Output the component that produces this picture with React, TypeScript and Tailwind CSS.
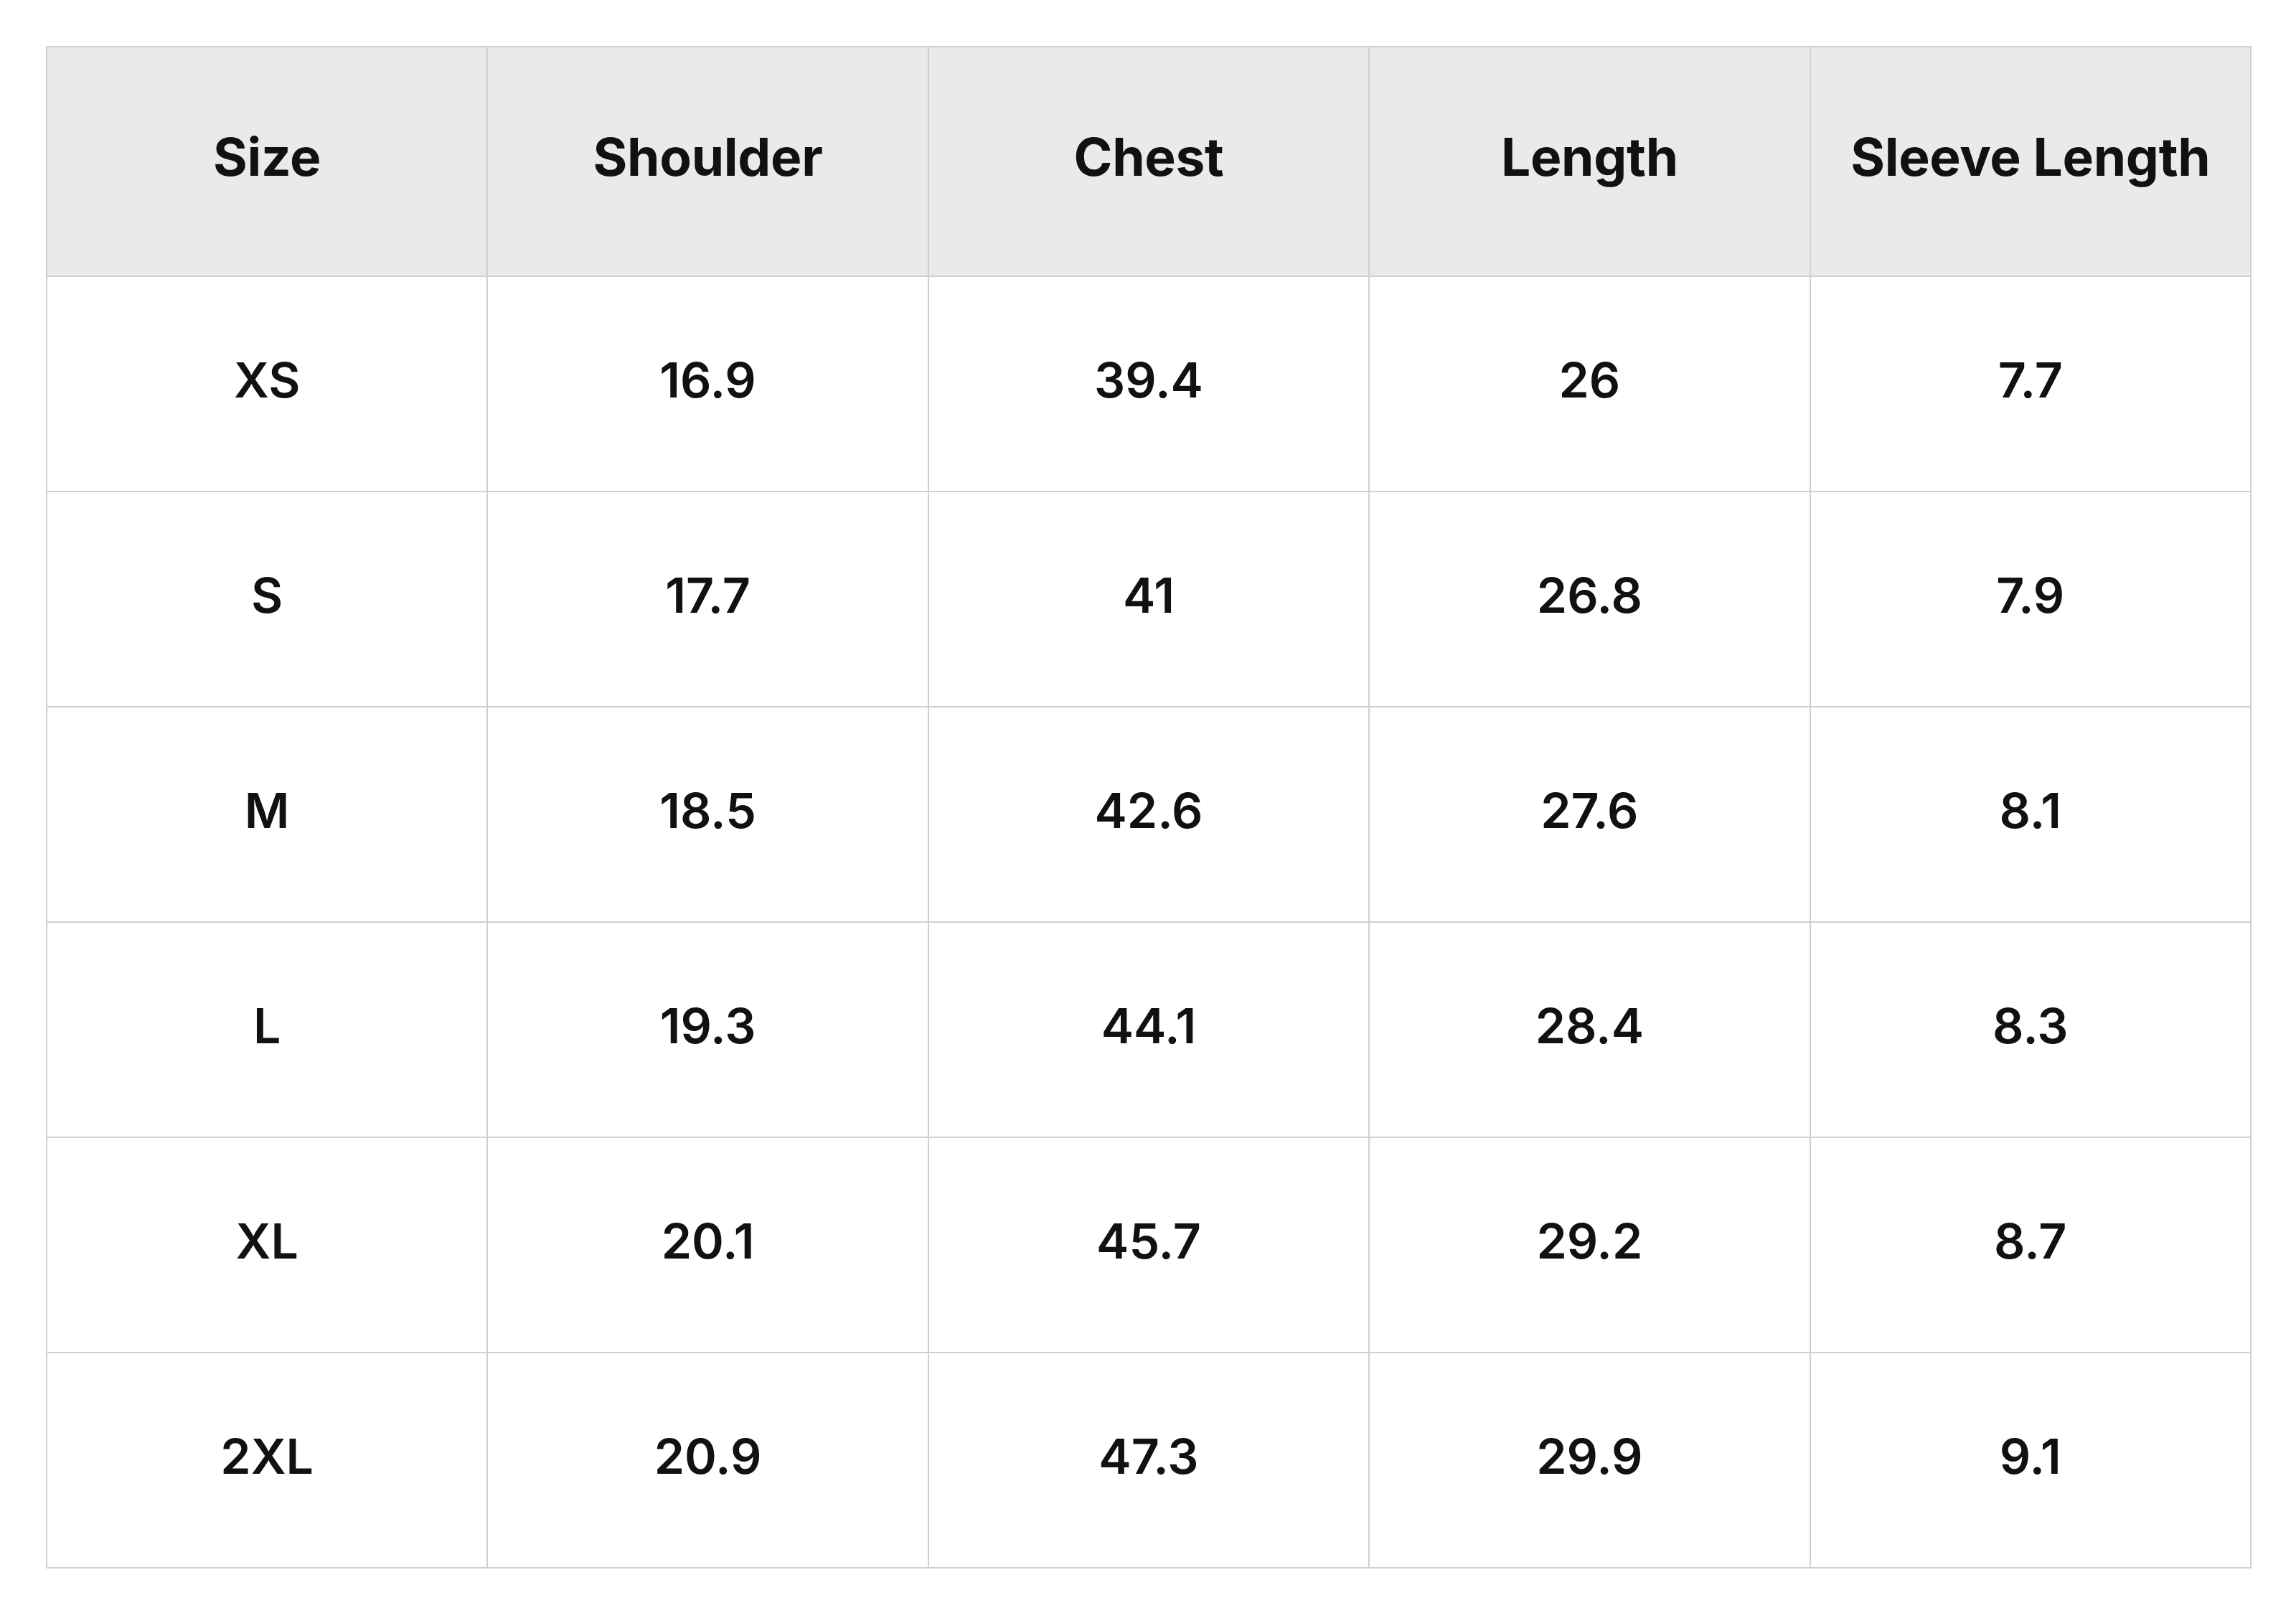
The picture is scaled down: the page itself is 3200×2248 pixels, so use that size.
import React from "react";

const headers = ["Size", "Shoulder", "Chest", "Length", "Sleeve Length"];
const rows = [
  ["XS", "16.9", "39.4", "26", "7.7"],
  ["S", "17.7", "41", "26.8", "7.9"],
  ["M", "18.5", "42.6", "27.6", "8.1"],
  ["L", "19.3", "44.1", "28.4", "8.3"],
  ["XL", "20.1", "45.7", "29.2", "8.7"],
  ["2XL", "20.9", "47.3", "29.9", "9.1"],
];

export default function App() {
  return (
    <div className="w-[3200px] h-[2248px] bg-white pt-[64px] pl-[64px]" style={{ fontFamily: "Inter, 'Noto Sans', sans-serif" }}>
      <div className="w-[3074px] border-t-2 border-l-2 border-[#d0d0d0] grid grid-cols-5 text-[#111111]">
        {headers.map((h) => (
          <div key={h} className="h-[320px] pb-[12px] bg-[#eaeaea] border-r-2 border-b-2 border-[#d0d0d0] flex items-center justify-center text-[73px] font-bold tracking-[-0.3px]">
            {h}
          </div>
        ))}
        {rows.map((r) =>
          r.map((c, i) => (
            <div key={r[0] + i} className="h-[300px] pb-[12px] bg-white border-r-2 border-b-2 border-[#d0d0d0] flex items-center justify-center text-[68px] font-semibold">
              {c}
            </div>
          ))
        )}
      </div>
    </div>
  );
}
